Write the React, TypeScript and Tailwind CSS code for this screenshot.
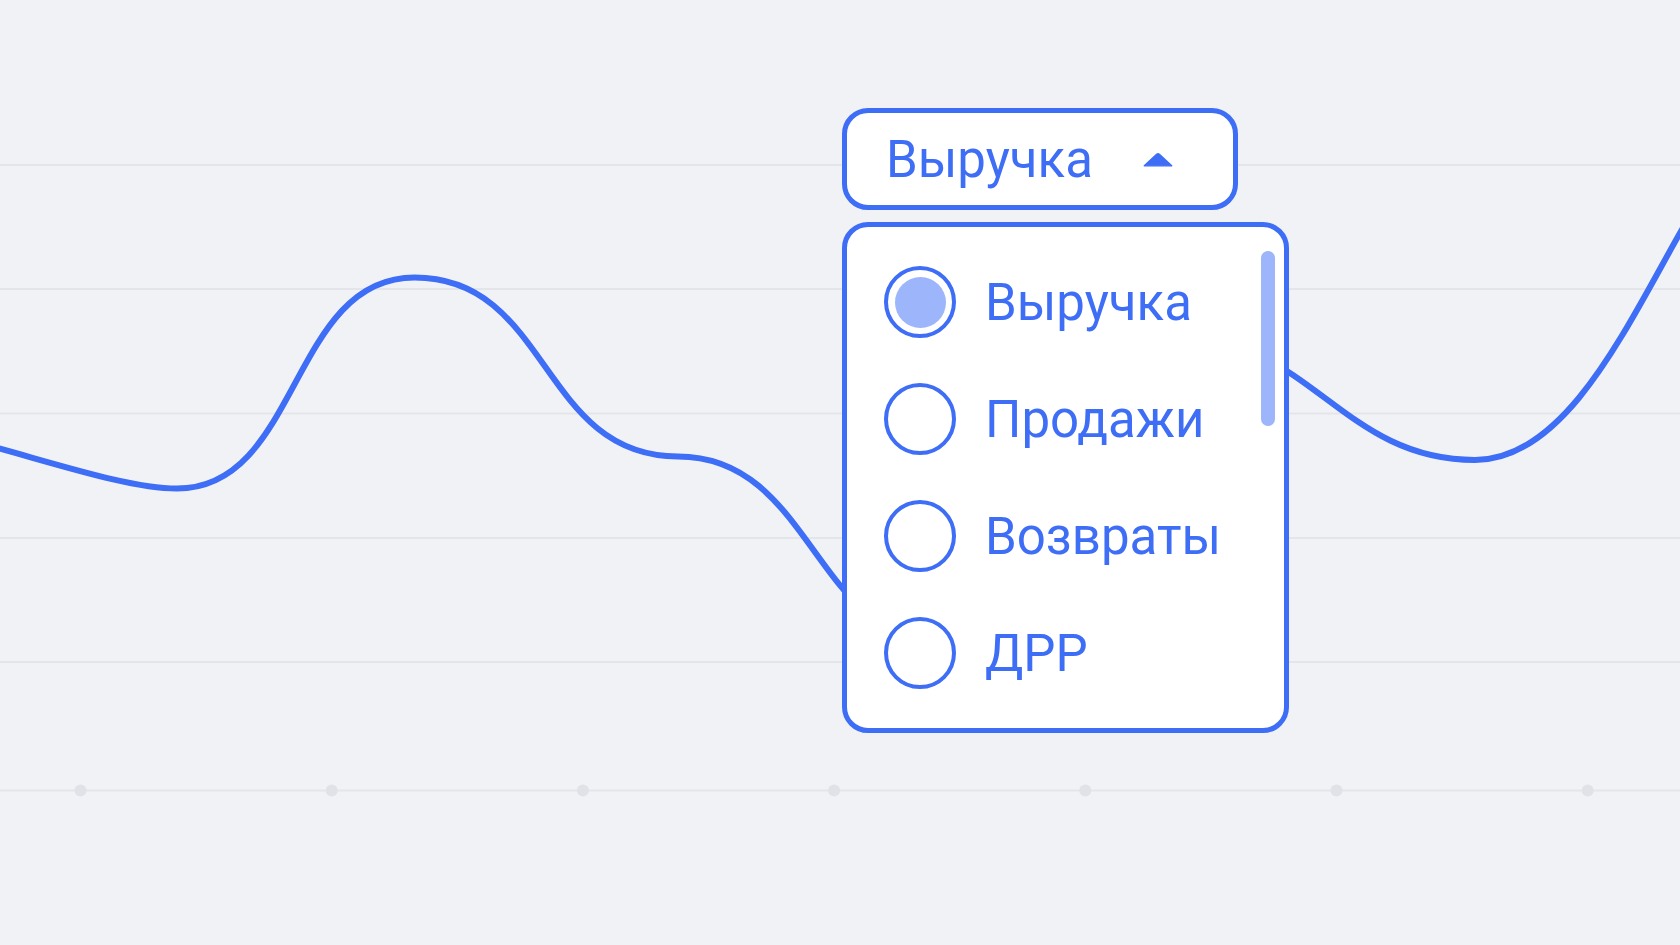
import React from "react";

const BLUE = "#3e6df6";

function Radio({ checked }: { checked: boolean }) {
  return (
    <div className="flex h-[72px] w-[72px] shrink-0 items-center justify-center rounded-full border-4 border-[#3e6df6] bg-white">
      {checked && <div className="h-[51px] w-[51px] rounded-full bg-[#9db6fb]" />}
    </div>
  );
}

function Chart() {
  const grid = [165, 289, 413.5, 538, 662];
  const dots = [0, 1, 2, 3, 4, 5, 6].map((i) => 80.5 + 251.2 * i);
  return (
    <svg className="block h-full w-full" viewBox="0 0 1680 945" preserveAspectRatio="none">
      {grid.map((y) => (
        <line key={y} x1={0} x2={1680} y1={y} y2={y} stroke="#e3e5ea" strokeWidth={2} />
      ))}
      <line x1={0} x2={1680} y1={790.5} y2={790.5} stroke="#e3e5ea" strokeWidth={2} />
      {dots.map((x) => (
        <circle key={x} cx={x} cy={790.5} r={6} fill="#e0e2e7" />
      ))}
      <path
        d="M -40 438 C 40 458, 125 488.5, 177 488.5 C 300 488.5, 290 277.5, 414.6 277.5 C 550 277.5, 540 456.4, 678 456.4 C 814 456.4, 814 645, 950 645 C 1060 645, 1060 335, 1170 335 C 1310 335, 1340 460, 1475 460 C 1565 460, 1625 330, 1680 233 L 1720 162"
        fill="none"
        stroke={BLUE}
        strokeWidth={6}
        strokeLinecap="round"
        strokeLinejoin="round"
      />
    </svg>
  );
}

export default function App() {
  const items = ["Выручка", "Продажи", "Возвраты", "ДРР"];
  return (
    <div className="relative h-[945px] w-full overflow-hidden bg-[#f1f2f6] font-[Roboto,sans-serif]">
      <Chart />
      <div className="absolute left-[842px] top-[108px] flex w-[447px] flex-col gap-[12px]">
        <div className="flex h-[102px] w-[396px] items-center justify-between rounded-[26px] border-[5px] border-[#3e6df6] bg-white pl-[39px] pr-[60px] text-[#3e6df6]">
          <span className="text-[51px] leading-none">Выручка</span>
          <svg width="30" height="15" viewBox="0 0 30 15">
            <path
              d="M1.2 13.8 L13.6 2.3 Q15 1 16.4 2.3 L28.8 13.8 Z"
              fill={BLUE}
              stroke={BLUE}
              strokeWidth={1.2}
              strokeLinejoin="round"
            />
          </svg>
        </div>
        <div className="relative h-[511px] w-[447px] rounded-[26px] border-[5px] border-[#3e6df6] bg-white">
          <div className="flex flex-col gap-[45px] pl-[37px] pt-[39px]">
            {items.map((t, i) => (
              <div key={t} className="flex items-center gap-[29px]">
                <Radio checked={i === 0} />
                <span className="text-[51px] leading-none text-[#3e6df6]">{t}</span>
              </div>
            ))}
          </div>
          <div className="absolute right-[9px] top-[24px] h-[175px] w-[14px] rounded-full bg-[#9db6fb]" />
        </div>
      </div>
    </div>
  );
}
